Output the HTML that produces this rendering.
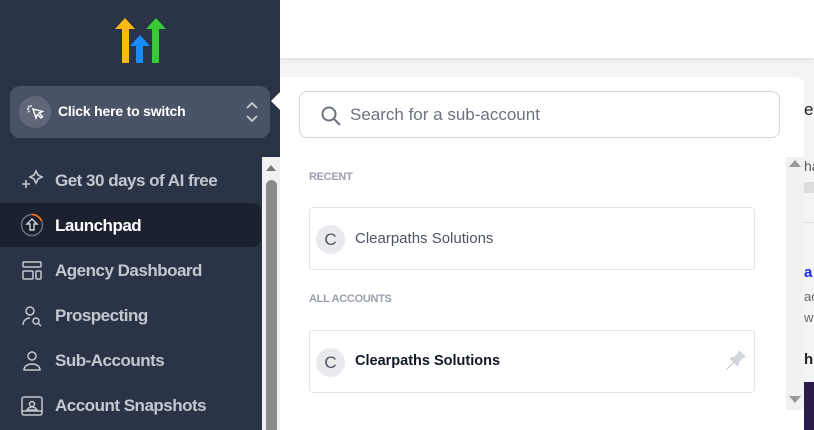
<!DOCTYPE html>
<html style="width:814px;height:430px;overflow:hidden"><head><meta charset="utf-8"><style>
*{margin:0;padding:0;box-sizing:border-box}
body{width:814px;height:430px;overflow:hidden;background:#f3f4f6;font-family:"Liberation Sans",sans-serif;position:relative}
.sb{position:absolute;left:0;top:0;width:280px;height:430px;background:#2b3447;overflow:hidden}
.topbar{position:absolute;left:280px;top:0;width:534px;height:58px;background:#fff;box-shadow:0 2px 4px rgba(0,0,0,.08)}
.sw{position:absolute;left:10px;top:86px;width:260px;height:52px;border-radius:10px;background:#4a5365}
.sw .ic{position:absolute;left:9px;top:10px;width:32px;height:32px;border-radius:50%;background:#5f6778}
.sw .t{position:absolute;left:48px;top:17px;color:#fff;font-weight:bold;font-size:14px;letter-spacing:-.2px}
.nav{position:absolute;left:55px;font-size:17px;color:#c3c7cf;font-weight:bold;letter-spacing:-.5px}
.navi{position:absolute;left:20px}
.lp{position:absolute;left:0;top:203px;width:261px;height:44px;background:#1b2130;border-radius:0 8px 8px 0}
.sbs{position:absolute;left:262px;top:157px;width:18px;height:273px;background:#f1f1f1;overflow:hidden}
.panel{position:absolute;left:280px;top:77px;width:524px;height:353px;background:#fff;border-radius:0 8px 0 0;overflow:hidden}
.search{position:absolute;left:19px;top:14px;width:481px;height:47px;border:1px solid #d1d5db;border-radius:8px}
.search span{position:absolute;left:50px;top:13px;font-size:17px;color:#6b7280}
.lbl{position:absolute;left:29px;font-size:11px;color:#9aa0ab;font-weight:bold;letter-spacing:-.3px}
.card{position:absolute;left:29px;width:446px;height:63px;border:1px solid #e5e7eb;border-radius:4px}
.card .av{position:absolute;left:6px;top:17px;width:29px;height:29px;border-radius:50%;background:#e9eaee;color:#4b5563;font-size:17px;text-align:center;line-height:29px}
.card .n{position:absolute;left:45px;top:22px;font-size:15px}
.rs{position:absolute;left:786px;top:157px;width:18px;height:253px;background:#f1f1f1}
</style></head><body>
<div class="topbar"></div>
<div style="position:absolute;left:804px;top:100px;font-size:17px;color:#222">er</div>
<div style="position:absolute;left:804px;top:158px;font-size:14px;color:#555">ha</div>
<div style="position:absolute;left:804px;top:182px;width:10px;height:11px;background:#ddd"></div>
<div style="position:absolute;left:804px;top:222px;width:10px;height:1px;background:#ddd"></div>
<div style="position:absolute;left:804px;top:264px;font-size:15px;color:#1d2cf0;font-weight:bold">a</div>
<div style="position:absolute;left:804px;top:289px;font-size:13px;color:#666">ac</div>
<div style="position:absolute;left:804px;top:310px;font-size:13px;color:#666">wi</div>
<div style="position:absolute;left:804px;top:351px;font-size:15px;color:#222;font-weight:bold">h</div>
<div style="position:absolute;left:804px;top:382px;width:10px;height:48px;background:#2c1a4a"></div>
<div class="sb">
<svg style="position:absolute;left:114px;top:17px" width="54" height="48">
<path d="M1 12L11 1L21 12H15V46H8V12Z" fill="#fdb913"/>
<path d="M16 29L26 18L36 29H29V46H22V29Z" fill="#188bf6"/>
<path d="M32 12L42 1L52 12H45V46H38V12Z" fill="#37ca37"/>
</svg>
<div class="sw"><div class="ic"><svg width="32" height="32" viewBox="0 0 32 32" fill="none" stroke="#fff" stroke-width="1.4"><path d="M14 13l3 9 1.5-3.5 3.5 3.5 1.5-1.5-3.5-3.5 3.5-1.5z"/><path d="M12 9v2M8 13h2M9 10l1.5 1.5M9 16l1.5-1"/></svg></div>
<div class="t">Click here to switch</div>
<svg style="position:absolute;left:236px;top:15px" width="12" height="22" fill="none" stroke="#c9ccd3" stroke-width="1.8"><path d="M1 7l5-5 5 5M1 15l5 5 5-5"/></svg></div>
<svg style="position:absolute;left:270px;top:90px" width="12" height="22"><path d="M12 0L1 11L12 22Z" fill="#fff"/></svg>
<svg class="navi" style="top:168px" width="24" height="24" fill="none" stroke="#c3c7cf" stroke-width="1.6"><path d="M2 16h8M6 12v8"/><path d="M16 3l2 4 4 2-4 2-2 4-2-4-4-2 4-2z"/></svg>
<div class="nav" style="top:171px">Get 30 days of AI free</div>
<div class="lp"></div>
<svg class="navi" style="top:213px" width="24" height="24" fill="none"><circle cx="12" cy="12" r="10.5" stroke="#6b7280" stroke-width="1.4"/><path d="M12 1.5A10.5 10.5 0 0 1 21.5 8" stroke="#f97316" stroke-width="1.6"/><path d="M12 6l-5 5h3v6h4v-6h3z" stroke="#d1d5db" stroke-width="1.4"/></svg>
<div class="nav" style="top:216px;color:#fff">Launchpad</div>
<svg class="navi" style="top:259px" width="24" height="24" fill="none" stroke="#c3c7cf" stroke-width="1.5"><rect x="3" y="3" width="18" height="5" rx="1"/><rect x="3" y="12" width="10" height="8" rx="1"/><rect x="16" y="12" width="5" height="8" rx="1"/></svg>
<div class="nav" style="top:261px">Agency Dashboard</div>
<svg class="navi" style="top:304px" width="24" height="24" fill="none" stroke="#c3c7cf" stroke-width="1.5"><circle cx="10" cy="7" r="4"/><path d="M3 21c0-4 3-7 7-7"/><circle cx="16" cy="17" r="3"/><path d="M18.5 19.5L21 22"/></svg>
<div class="nav" style="top:306px">Prospecting</div>
<svg class="navi" style="top:349px" width="24" height="24" fill="none" stroke="#c3c7cf" stroke-width="1.5"><circle cx="12" cy="7" r="4"/><path d="M4 21c0-4 4-6 8-6s8 2 8 6z"/></svg>
<div class="nav" style="top:351px">Sub-Accounts</div>
<svg class="navi" style="top:394px" width="24" height="24" fill="none" stroke="#c3c7cf" stroke-width="1.5"><rect x="2" y="3" width="20" height="18" rx="2"/><circle cx="12" cy="10" r="2.5"/><path d="M7 16c1-2 3-3 5-3s4 1 5 3zM2 17h20"/></svg>
<div class="nav" style="top:396px">Account Snapshots</div>
</div>
<div class="sbs"><svg style="position:absolute;left:4px;top:8px" width="10" height="6"><path d="M0 6L5 0L10 6Z" fill="#777"/></svg><div style="position:absolute;left:4px;top:23px;width:11px;height:260px;border-radius:6px;background:#8a8a8a"></div></div>
<div class="panel">
<div class="search"><svg style="position:absolute;left:20px;top:13px" width="22" height="22" fill="none" stroke="#6b7280" stroke-width="2"><circle cx="9" cy="9" r="6.5"/><path d="M14 14l6 6"/></svg><span>Search for a sub-account</span></div>
<div class="lbl" style="top:94px">RECENT</div>
<div class="card" style="top:130px"><div class="av">C</div><div class="n" style="color:#4b5563">Clearpaths Solutions</div></div>
<div class="lbl" style="top:216px">ALL ACCOUNTS</div>
<div class="card" style="top:253px"><div class="av">C</div><div class="n" style="color:#111827;font-weight:bold;font-size:14.5px">Clearpaths Solutions</div>
<svg style="position:absolute;left:415px;top:18px" width="22" height="22" fill="#d1d5db"><path d="M14 1l7 7-3 1-4 4 0 3-2 1-3-3-7 7-1 0 0-1 7-7-3-3 1-2 3 0 4-4z"/></svg></div>
</div>
<div class="rs"><svg style="position:absolute;left:3px;top:3px" width="12" height="7"><path d="M0 7L6 0L12 7Z" fill="#999"/></svg><svg style="position:absolute;left:3px;top:239px" width="12" height="7"><path d="M0 0L6 7L12 0Z" fill="#999"/></svg></div>
</body></html>
